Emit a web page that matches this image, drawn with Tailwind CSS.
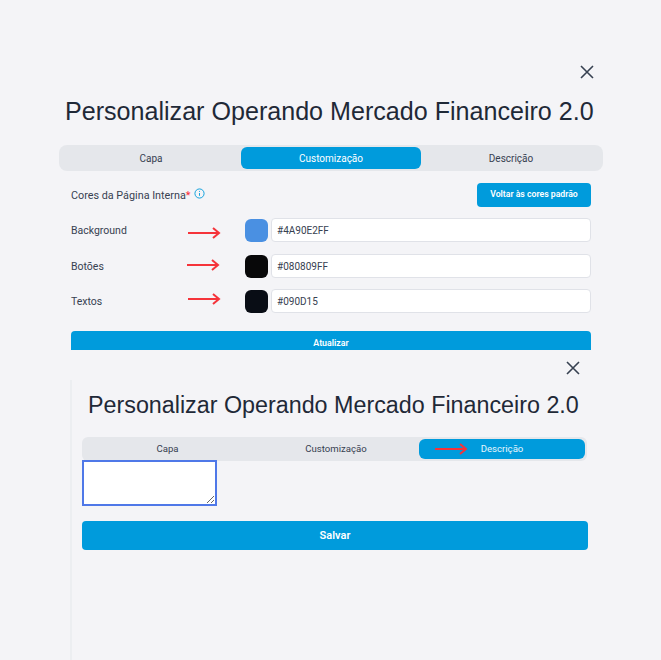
<!doctype html>
<html lang="pt">
<head>
<meta charset="utf-8">
<script src="https://cdn.jsdelivr.net/npm/@tailwindcss/browser@4"></script>
</head>
<body class="bg-[#f4f4f7] font-['Roboto',sans-serif] text-[#374151]">
<div class="relative w-[661px] h-[660px] overflow-hidden">

  <section class="h-[350px] overflow-hidden pt-[62px]">
    <div class="flex justify-end pr-[64px] h-5">
      <svg class="w-5 h-5 text-[#374151]" viewBox="0 0 20 20" fill="none" stroke="currentColor" stroke-width="1.6"><path d="M4 4l12 12M16 4L4 16"/></svg>
    </div>
    <h1 class="mt-[13px] ml-[65px] font-['Liberation_Sans',sans-serif] text-[25.1px] leading-[32px] text-[#1f2937] whitespace-nowrap">Personalizar Operando Mercado Financeiro 2.0</h1>
    <div class="mt-[18px] ml-[59px] w-[544px] h-[26px] bg-[#e5e7eb] rounded-lg grid grid-cols-3 items-center px-[2px] text-[10px]">
      <div class="text-center pt-[1px]">Capa</div>
      <div class="bg-[#009bdc] text-white h-[22px] rounded-md flex items-center justify-center pt-[1px]">Customização</div>
      <div class="text-center pt-[1px]">Descrição</div>
    </div>
    <div class="ml-[71px] w-[520px]">
      <div class="mt-3 h-6 flex items-center justify-between">
        <div class="flex items-center text-[10.8px] pt-[2px]">
          <span>Cores da Página Interna</span><span class="text-red-500">*</span>
          <svg class="ml-[3px] -mt-[5px] w-[11px] h-[11px] text-[#009bdc]" viewBox="0 0 12 12" fill="none" stroke="currentColor" stroke-width="1"><circle cx="6" cy="6" r="5"/><path d="M6 5.5v3M6 3.2v1"/></svg>
        </div>
        <button class="w-[114px] h-6 bg-[#009bdc] text-white rounded-sm text-[8.7px] font-semibold">Voltar às cores padrão</button>
      </div>
      <div class="mt-[11px] flex flex-col gap-[12px] text-[10.5px]">
        <div class="flex items-center h-6">
          <span class="w-[174px] pt-[2px]">Background</span>
          <span class="w-[23px] h-[23px] rounded-md bg-[#4a90e2]"></span>
          <input class="ml-[3px] flex-1 h-6 bg-white border border-[#e0e2e8] rounded-sm px-[5px] text-[10px] outline-none" value="#4A90E2FF">
        </div>
        <div class="flex items-center h-6">
          <span class="w-[174px] pt-[2px]">Botões</span>
          <span class="w-[23px] h-[23px] rounded-md bg-[#080809]"></span>
          <input class="ml-[3px] flex-1 h-6 bg-white border border-[#e0e2e8] rounded-sm px-[5px] text-[10px] outline-none" value="#080809FF">
        </div>
        <div class="flex items-center h-6 -mt-[1px]">
          <span class="w-[174px] pt-[2px]">Textos</span>
          <span class="w-[23px] h-[23px] rounded-md bg-[#090d15]"></span>
          <input class="ml-[3px] flex-1 h-6 bg-white border border-[#e0e2e8] rounded-sm px-[5px] text-[10px] outline-none" value="#090D15">
        </div>
      </div>
      <button class="mt-[18px] w-full h-6 bg-[#009bdc] text-white rounded-t-sm text-[8.8px] font-semibold pt-[2px]">Atualizar</button>
    </div>
  </section>

  <section class="relative h-[310px] ml-[70px] pt-[8px]">
    <div class="absolute left-0 top-[30px] bottom-0 w-[2px] bg-[#eceef1]"></div>
    <div class="flex justify-end pr-[78px] h-5">
      <svg class="w-5 h-5 text-[#374151]" viewBox="0 0 20 20" fill="none" stroke="currentColor" stroke-width="1.6"><path d="M4 4l12 12M16 4L4 16"/></svg>
    </div>
    <h1 class="mt-[11px] ml-[18px] font-['Liberation_Sans',sans-serif] text-[23.3px] leading-[32px] text-[#1f2937] whitespace-nowrap">Personalizar Operando Mercado Financeiro 2.0</h1>
    <div class="mt-[16px] ml-[12px] w-[505px] h-6 bg-[#e5e7eb] rounded-md grid grid-cols-[171px_166px_1fr] items-center pr-[2px] text-[9.6px]">
      <div class="text-center pt-[1px]">Capa</div>
      <div class="text-center pt-[1px]">Customização</div>
      <div class="bg-[#009bdc] text-[#e5f6fd] h-5 rounded-md flex items-center justify-center pt-[1px]">Descrição</div>
    </div>
    <textarea class="block -mt-[1px] ml-[12px] w-[135px] h-[46px] bg-white border-2 border-[#4f78e8]"></textarea>
    <button class="block mt-[15px] ml-[12px] w-[506px] h-[29px] bg-[#009bdc] text-white rounded-sm text-[11px] font-semibold pt-[2px]">Salvar</button>
  </section>

  <svg class="absolute left-[187px] top-[226px] w-[34px] h-[14px] text-[#f5333a]" viewBox="0 0 34 14" fill="none" stroke="currentColor" stroke-width="2"><path d="M1 7h31M26 2l6 5-6 5"/></svg>
  <svg class="absolute left-[186px] top-[258px] w-[34px] h-[14px] text-[#f5333a]" viewBox="0 0 34 14" fill="none" stroke="currentColor" stroke-width="2"><path d="M1 7h31M26 2l6 5-6 5"/></svg>
  <svg class="absolute left-[187px] top-[292px] w-[34px] h-[14px] text-[#f5333a]" viewBox="0 0 34 14" fill="none" stroke="currentColor" stroke-width="2"><path d="M1 7h31M26 2l6 5-6 5"/></svg>
  <svg class="absolute left-[434px] top-[442px] w-[34px] h-[14px] text-[#f5333a]" viewBox="0 0 34 14" fill="none" stroke="currentColor" stroke-width="2"><path d="M1 7h31M26 2l6 5-6 5"/></svg>
</div>
</body>
</html>
